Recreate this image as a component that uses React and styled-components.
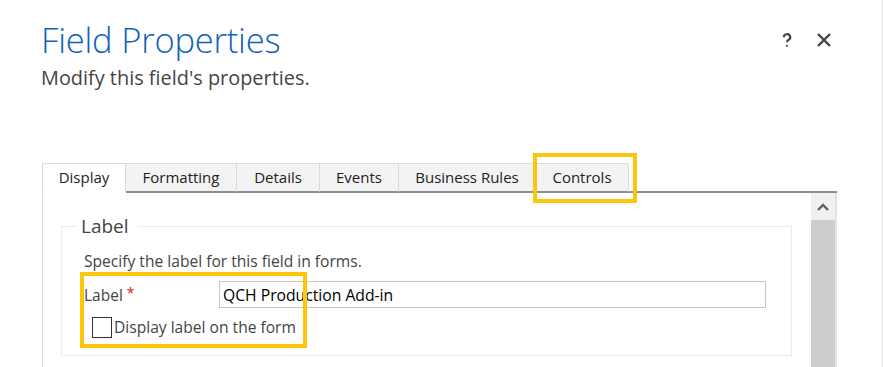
import React from 'react';
import styled, { createGlobalStyle } from 'styled-components';

const GlobalStyle = createGlobalStyle`
  html, body {
    margin: 0;
    padding: 0;
    background: #ffffff;
  }
  body {
    font-family: "Open Sans", "Noto Sans", sans-serif;
  }
`;

const Page = styled.div`
  position: relative;
  width: 882px;
  height: 367px;
  overflow: hidden;
  border-right: 1px solid #e4e4e4;
  background: #fff;
`;

const Header = styled.div`
  display: flex;
  justify-content: space-between;
  padding: 19px 0 0 41px;
  height: 163px;
  box-sizing: border-box;
`;

const TitleBlock = styled.div``;

const Title = styled.h1`
  margin: 0;
  font-weight: 300;
  font-size: 34.5px;
  line-height: 42px;
  color: #1161b8;
  letter-spacing: -0.2px;
`;

const Subtitle = styled.div`
  margin-top: 4px;
  font-size: 19.9px;
  line-height: 26px;
  color: #444;
`;

const Tools = styled.div`
  display: flex;
  gap: 21px;
  padding: 13px 50px 0 0;
  color: #444;
`;

const ToolIcon = styled.svg`
  width: 16px;
  height: 16px;
`;

const TabStrip = styled.div`
  display: flex;
  margin-left: 42px;
  width: 795px;
  height: 30px;
`;

const Tab = styled.div`
  box-sizing: border-box;
  width: ${(p) => p.$w}px;
  height: 30px;
  display: flex;
  align-items: center;
  justify-content: center;
  font-size: 15px;
  color: #222;
  border-top: 1px solid #d9d9d9;
  border-right: 1px solid #d9d9d9;
  border-left: ${(p) => (p.$first ? '1px solid #d9d9d9' : 'none')};
  background: ${(p) => (p.$active ? '#fff' : '#f3f3f3')};
  border-bottom: ${(p) => (p.$active ? '2px solid #fff' : '2px solid #8b8e94')};
  padding-bottom: 1px;
`;

const TabFill = styled.div`
  flex: 1;
  border-bottom: 2px solid #8b8e94;
`;

const Highlight = styled.div`
  position: absolute;
  box-sizing: border-box;
  border: 4px solid #fdc60a;
  pointer-events: none;
`;

const Panel = styled.div`
  display: flex;
  margin-left: 42px;
  width: 795px;
  height: 175px;
  box-sizing: border-box;
  border-left: 1px solid #dcdcdc;
  border-right: 2px solid #e2e2e2;
`;

const Content = styled.div`
  flex: 1;
  padding: 23px 19px 0 18px;
`;

const Fieldset = styled.fieldset`
  margin: 0;
  padding: 10px 0 0 22px;
  height: 140px;
  box-sizing: border-box;
  border: 1px solid #ebebeb;
  min-width: 0;
`;

const Legend = styled.legend`
  padding: 0 9px 0 5px;
  margin-left: -8px;
  font-size: 19px;
  line-height: 20px;
  color: #444;
`;

const Hint = styled.div`
  margin-top: 5px;
  font-size: 15.6px;
  line-height: 20px;
  color: #444;
`;

const Row = styled.div`
  display: flex;
  align-items: center;
  margin-top: 10px;
`;

const FieldLabel = styled.div`
  width: 135px;
  font-size: 15.5px;
  color: #444;
`;

const Required = styled.span`
  color: #d7141a;
  margin-left: 4px;
  font-size: 14px;
  position: relative;
  top: -3px;
`;

const TextInput = styled.input`
  box-sizing: border-box;
  width: 547px;
  height: 27px;
  border: 1px solid #c6c6c6;
  padding: 0 3px;
  font-family: inherit;
  font-size: 15.7px;
  color: #000;
  outline: none;
`;

const CheckRow = styled.label`
  display: flex;
  align-items: center;
  margin-top: 8px;
  margin-left: 8px;
  font-size: 15.6px;
  color: #444;
`;

const Box = styled.span`
  width: 18px;
  height: 19px;
  border: 1px solid #333;
  margin-right: 2px;
`;

const Scrollbar = styled.div`
  width: 24px;
  display: flex;
  flex-direction: column;
  background: #cdcdcd;
`;

const ScrollButton = styled.div`
  height: 27px;
  background: #f0f0f0;
  display: flex;
  align-items: center;
  justify-content: center;
`;

const tabs = [
  { name: 'Display', w: 84 },
  { name: 'Formatting', w: 111 },
  { name: 'Details', w: 83 },
  { name: 'Events', w: 79 },
  { name: 'Business Rules', w: 137 },
  { name: 'Controls', w: 93 },
];

export default function App() {
  return (
    <>
      <GlobalStyle />
      <Page>
        <Header>
          <TitleBlock>
            <Title>Field Properties</Title>
            <Subtitle>Modify this field's properties.</Subtitle>
          </TitleBlock>
          <Tools>
            <ToolIcon viewBox="0 0 16 16" fill="none" stroke="#444" strokeWidth="2.2">
              <path d="M4.8 5.2a3.2 3 0 1 1 4.6 2.7c-1 .6-1.4 1.1-1.4 2.4" />
              <circle cx="8" cy="13.8" r="1.1" fill="#444" stroke="none" />
            </ToolIcon>
            <ToolIcon viewBox="0 0 16 16" fill="none" stroke="#444" strokeWidth="2.4">
              <path d="M2 2l12 12M14 2L2 14" />
            </ToolIcon>
          </Tools>
        </Header>
        <TabStrip>
          {tabs.map((t, i) => (
            <Tab key={t.name} $w={t.w} $first={i === 0} $active={i === 0}>
              {t.name}
            </Tab>
          ))}
          <TabFill />
        </TabStrip>
        <Panel>
          <Content>
            <Fieldset>
              <Legend>Label</Legend>
              <Hint>Specify the label for this field in forms.</Hint>
              <Row>
                <FieldLabel>
                  Label
                  <Required>*</Required>
                </FieldLabel>
                <TextInput defaultValue="QCH Production Add-in" />
              </Row>
              <CheckRow>
                <Box />
                Display label on the form
              </CheckRow>
            </Fieldset>
          </Content>
          <Scrollbar>
            <ScrollButton>
              <svg width="12" height="8" viewBox="0 0 12 8">
                <path d="M1 7L6 2l5 5" fill="none" stroke="#606060" strokeWidth="2.4" />
              </svg>
            </ScrollButton>
          </Scrollbar>
        </Panel>
        <Highlight style={{ left: 533, top: 153, width: 104, height: 50 }} />
        <Highlight style={{ left: 80, top: 272, width: 227, height: 76 }} />
      </Page>
    </>
  );
}
